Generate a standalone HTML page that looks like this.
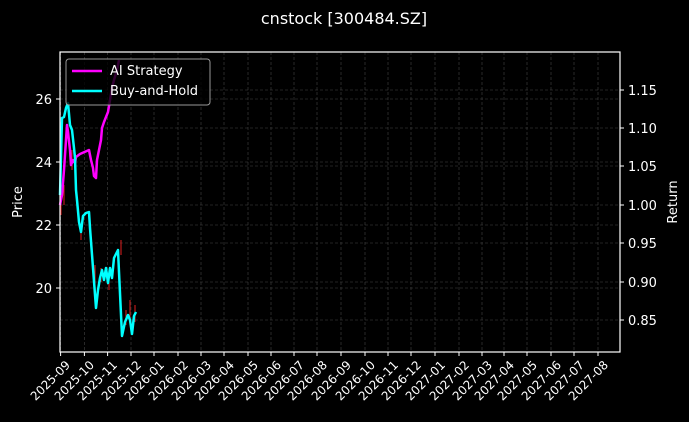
<!DOCTYPE html><html><head><style>
body{margin:0;background:#000;width:689px;height:422px;overflow:hidden;font-family:"DejaVu Sans","Liberation Sans",sans-serif;color:#fff}
.xl{position:absolute;font-size:12px;white-space:nowrap;transform-origin:100% 0;transform:rotate(-45deg)}
</style></head><body>
<svg width="689" height="422" style="position:absolute;left:0;top:0" font-family="DejaVu Sans, Liberation Sans, sans-serif" fill="#fff">
<text x="344" y="24" text-anchor="middle" font-size="16">cnstock [300484.SZ]</text>
<g stroke="#444" stroke-width="0.6" stroke-dasharray="3,2">
<line x1="60" x2="620" y1="99" y2="99"/><line x1="60" x2="620" y1="162" y2="162"/><line x1="60" x2="620" y1="225" y2="225"/><line x1="60" x2="620" y1="288" y2="288"/>
<line x1="60" x2="620" y1="90" y2="90"/><line x1="60" x2="620" y1="128" y2="128"/><line x1="60" x2="620" y1="166" y2="166"/><line x1="60" x2="620" y1="205" y2="205"/><line x1="60" x2="620" y1="243" y2="243"/><line x1="60" x2="620" y1="282" y2="282"/><line x1="60" x2="620" y1="320" y2="320"/>
<g id="vg"></g>
</g>
<g stroke="#fff" stroke-width="1">
<line x1="56" x2="60" y1="99" y2="99"/><line x1="56" x2="60" y1="162" y2="162"/><line x1="56" x2="60" y1="225" y2="225"/><line x1="56" x2="60" y1="288" y2="288"/>
<line x1="620" x2="624" y1="90" y2="90"/><line x1="620" x2="624" y1="128" y2="128"/><line x1="620" x2="624" y1="166" y2="166"/><line x1="620" x2="624" y1="205" y2="205"/><line x1="620" x2="624" y1="243" y2="243"/><line x1="620" x2="624" y1="282" y2="282"/><line x1="620" x2="624" y1="320" y2="320"/>
</g>
<g fill="none" stroke="#e02020" stroke-width="1">
<path d="M61 200V215M64 185V205M72 150V170M81 225V240M95 265V285M101 268V282M109 275V290M121 240V255M126 310V325M130 300V318M135 305V322"/>
</g>
<polyline fill="none" stroke="#ff00ff" stroke-width="2.5" stroke-linejoin="round" points="60,205 62,195 64,170 66,140 67,125 68,132 70,150 71,165 73,160 75,163 76,157 80,154 89,150 91,160 93,168 94,176 96,178 97,160 99,150 101,140 102,128 104,122 106,117 108,112 110,100 112,88 114,80 117,70 119,60"/>
<polyline fill="none" stroke="#00ffff" stroke-width="2.5" stroke-linejoin="round" points="60,195 62,118 64,117 66,108 68,103 70,125 72,130 74,148 75,158 76,190 77,200 79,222 81,232 83,216 86,213 89,212 90,228 93,268 96,308 98,290 100,278 102,270 104,280 106,268 108,283 110,268 112,278 114,258 118,250 119,272 122,336 125,322 128,315 130,320 132,334 134,316 136,312"/>
<rect x="60" y="52" width="560" height="300" fill="none" stroke="#fff" stroke-width="1.2"/>
<rect x="66" y="59" width="144" height="46" rx="3" fill="#000" fill-opacity="0.8" stroke="#999"/>
<line x1="72" x2="102" y1="71" y2="71" stroke="#ff00ff" stroke-width="2.5"/>
<line x1="72" x2="102" y1="91" y2="91" stroke="#00ffff" stroke-width="2.5"/>
<text x="110" y="75" font-size="13">AI Strategy</text>
<text x="110" y="95" font-size="13">Buy-and-Hold</text>
<g font-size="13" text-anchor="end">
<text x="52" y="104">26</text><text x="52" y="167">24</text><text x="52" y="230">22</text><text x="52" y="293">20</text></g>
<g font-size="13">
<text x="628" y="95">1.15</text><text x="628" y="133">1.10</text><text x="628" y="171">1.05</text><text x="628" y="210">1.00</text><text x="628" y="248">0.95</text><text x="628" y="287">0.90</text><text x="628" y="325">0.85</text></g>
<text transform="translate(22,202) rotate(-90)" text-anchor="middle" font-size="13">Price</text>
<text transform="translate(677,202) rotate(-90)" text-anchor="middle" font-size="13">Return</text>
</svg>
<div id="xl"></div>
<script>
var xs=[60.6,84.4,107.6,131,154,178,201,224,248,271,294,317,341,365,388,411,435,459,482,504,527,551,574,598];
var labs=["2025-09","2025-10","2025-11","2025-12","2026-01","2026-02","2026-03","2026-04","2026-05","2026-06","2026-07","2026-08","2026-09","2026-10","2026-11","2026-12","2027-01","2027-02","2027-03","2027-04","2027-05","2027-06","2027-07","2027-08"];
var g=document.getElementById('vg'),ns="http://www.w3.org/2000/svg",svg=document.querySelector('svg'),h='';
xs.forEach(function(x,i){
 var l=document.createElementNS(ns,'line');l.setAttribute('x1',x);l.setAttribute('x2',x);l.setAttribute('y1',52);l.setAttribute('y2',352);g.appendChild(l);
 var t=document.createElementNS(ns,'line');t.setAttribute('x1',x);t.setAttribute('x2',x);t.setAttribute('y1',352);t.setAttribute('y2',356);t.setAttribute('stroke','#fff');svg.appendChild(t);
 h+='<div class="xl" style="right:'+(689-x-3)+'px;top:358px">'+labs[i]+'</div>';
});
document.getElementById('xl').innerHTML=h;
</script>
</body></html>
